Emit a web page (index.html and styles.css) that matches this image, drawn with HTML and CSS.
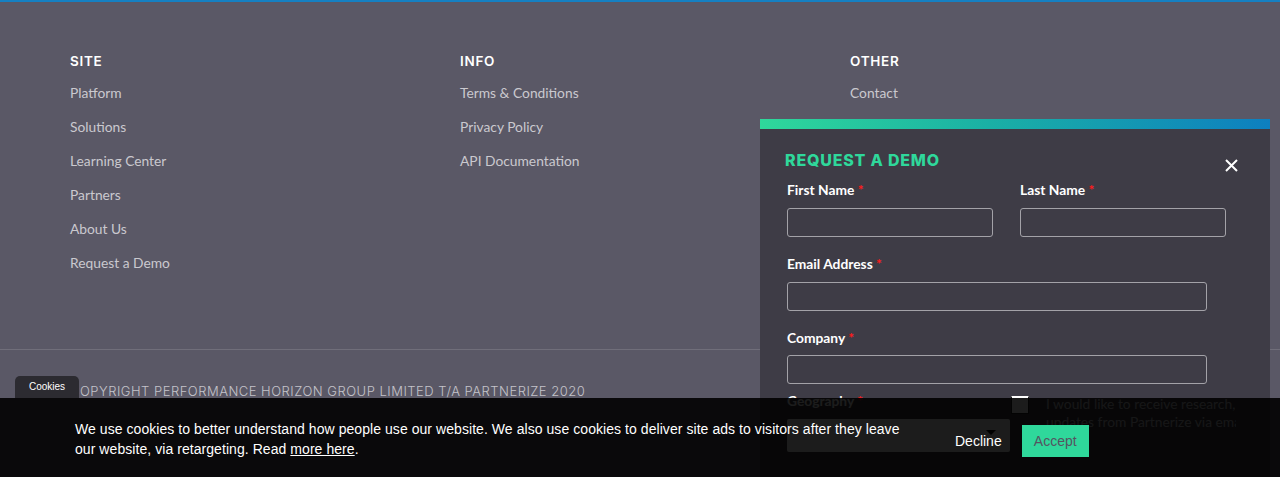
FILE: index.html
```html
<!DOCTYPE html>
<html lang="en">
<head>
<meta charset="utf-8">
<title>Footer</title>
<link rel="stylesheet" href="styles.css">
</head>
<body>
<div class="topline"></div>
<footer class="footer">
  <div class="cols">
    <div class="col">
      <h4 class="col-title">SITE</h4>
      <a class="link" href="#">Platform</a>
      <a class="link" href="#">Solutions</a>
      <a class="link" href="#">Learning Center</a>
      <a class="link" href="#">Partners</a>
      <a class="link" href="#">About Us</a>
      <a class="link" href="#">Request a Demo</a>
    </div>
    <div class="col">
      <h4 class="col-title">INFO</h4>
      <a class="link" href="#">Terms &amp; Conditions</a>
      <a class="link" href="#">Privacy Policy</a>
      <a class="link" href="#">API Documentation</a>
    </div>
    <div class="col">
      <h4 class="col-title">OTHER</h4>
      <a class="link" href="#">Contact</a>
    </div>
  </div>
  <div class="bottom">
    <p class="copyright">COPYRIGHT PERFORMANCE HORIZON GROUP LIMITED T/A PARTNERIZE 2020</p>
  </div>
</footer>

<div class="modal">
  <div class="modal-bar"></div>
  <div class="modal-body">
    <h3 class="modal-title">REQUEST A DEMO</h3>
    <button class="close" aria-label="Close">
      <svg width="13" height="13" viewBox="0 0 13 13"><path d="M1 1 L12 12 M12 1 L1 12" stroke="#fff" stroke-width="2" fill="none"/></svg>
    </button>
    <form class="form">
      <div class="row two">
        <div class="field">
          <label class="label">First Name <span class="req">*</span></label>
          <input class="input" type="text">
        </div>
        <div class="field">
          <label class="label">Last Name <span class="req">*</span></label>
          <input class="input" type="text">
        </div>
      </div>
      <div class="field">
        <label class="label">Email Address <span class="req">*</span></label>
        <input class="input wide" type="text">
      </div>
      <div class="field company">
        <label class="label">Company <span class="req">*</span></label>
        <input class="input wide" type="text">
      </div>
      <div class="row last">
        <div class="field geo">
          <label class="label">Geography <span class="req">*</span></label>
          <div class="select"><span class="arrow"></span></div>
        </div>
        <div class="consent">
          <span class="checkbox"></span>
          <div class="consent-text">
            <span>I would like to receive research, insights and</span>
            <span>updates from Partnerize via email</span>
          </div>
        </div>
      </div>
    </form>
  </div>
</div>

<div class="cookie-tab">Cookies</div>
<div class="cookie-banner">
  <p class="cookie-text">We use cookies to better understand how people use our website. We also use cookies to deliver site ads to visitors after they leave our website, via retargeting. Read <a href="#" class="more">more here</a>.</p>
  <button class="btn decline">Decline</button>
  <button class="btn accept">Accept</button>
</div>
</body>
</html>
```

FILE: styles.css
```css
html, body {
  margin: 0;
  padding: 0;
}
body {
  width: 1280px;
  height: 477px;
  overflow: hidden;
  background: #5a5866;
  position: relative;
  font-family: "Lato", "Liberation Sans", sans-serif;
}
.topline {
  height: 2px;
  background: #1580c2;
}
.footer {
  background: #5a5866;
}
.cols {
  display: grid;
  grid-template-columns: 390px 390px 390px;
  padding: 49px 0 76px 70px;
  border-bottom: 1px solid #706e7a;
}
.col {
  display: flex;
  flex-direction: column;
  align-items: flex-start;
}
.col-title {
  margin: 0 0 12px;
  font-family: "Inter", "Open Sans", sans-serif;
  font-weight: 600;
  font-size: 13.5px;
  line-height: 20px;
  color: #ffffff;
  letter-spacing: 0.7px;
}
.link {
  font-family: "Lato", sans-serif;
  font-size: 13.8px;
  line-height: 20px;
  color: #cac9cf;
  text-decoration: none;
  margin-bottom: 14px;
}
.link:last-child {
  margin-bottom: 0;
}
.bottom {
  padding: 31px 0 0 70px;
}
.copyright {
  margin: 0;
  font-family: "Inter", "Open Sans", sans-serif;
  font-weight: 300;
  font-size: 13px;
  line-height: 20px;
  color: #c4c3ca;
  letter-spacing: 0.5px;
}

/* modal */
.modal {
  position: absolute;
  left: 760px;
  top: 119px;
  width: 510px;
  height: 400px;
  background: #3e3c46;
}
.modal-bar {
  height: 10px;
  background: linear-gradient(90deg, #2fd89b 0%, #1ab0a5 45%, #0d7fc0 100%);
}
.modal-body {
  position: relative;
  padding: 21px 0 0 25px;
}
.modal-title {
  margin: 0 0 11px;
  font-family: "Inter", "Open Sans", sans-serif;
  font-weight: 800;
  font-size: 16px;
  line-height: 20px;
  color: #2fd89b;
  letter-spacing: 0.8px;
}
.close {
  position: absolute;
  right: 32px;
  top: 30px;
  width: 13px;
  height: 13px;
  padding: 0;
  border: 0;
  background: transparent;
  display: block;
}
.close svg { display: block; }
.form {
  padding-left: 2px;
  display: flex;
  flex-direction: column;
}
.row {
  display: flex;
}
.row.two {
  gap: 27px;
}
.field {
  display: flex;
  flex-direction: column;
  margin-bottom: 18px;
}
.label {
  font-family: "Lato", sans-serif;
  font-weight: 700;
  font-size: 13.8px;
  line-height: 18px;
  color: #ffffff;
  margin-bottom: 9px;
}
.req {
  color: #ff1a1a;
}
.input {
  box-sizing: border-box;
  width: 206px;
  height: 29px;
  border: 1px solid #a3a2a8;
  border-radius: 3px;
  background: transparent;
  margin: 0;
}
.input.wide {
  width: 420px;
}
.company {
  margin-bottom: 8px;
}
.company .label {
  margin-bottom: 8px;
}
.geo {
  width: 223px;
  margin-bottom: 0;
}
.select {
  position: relative;
  height: 33px;
  background: #ffffff;
  border-radius: 2px;
}
.arrow {
  position: absolute;
  right: 14px;
  top: 11px;
  width: 0;
  height: 0;
  border-left: 5px solid transparent;
  border-right: 5px solid transparent;
  border-top: 5px solid #000;
}
.consent {
  display: flex;
  align-items: flex-start;
  padding-top: 4px;
}
.checkbox {
  box-sizing: border-box;
  width: 18px;
  height: 18px;
  margin-left: 1px;
  background: #ffffff;
  border: 1px solid #222;
  border-top: 1px solid #ffffff;
}
.consent-text {
  margin-left: 17px;
  margin-top: -1px;
  width: 190px;
  overflow: hidden;
  display: flex;
  flex-direction: column;
  font-family: "Lato", sans-serif;
  font-size: 13.8px;
  line-height: 18px;
  color: #c8c7cc;
  white-space: nowrap;
}

/* cookies */
.cookie-tab {
  position: absolute;
  left: 15px;
  top: 376px;
  width: 64px;
  height: 22px;
  box-sizing: border-box;
  border-radius: 5px 5px 0 0;
  background: #2c2b31;
  color: #ffffff;
  font-family: "Liberation Sans", Arial, sans-serif;
  font-size: 10px;
  line-height: 22px;
  text-align: center;
  z-index: 5;
}
.cookie-banner {
  position: absolute;
  left: 0;
  top: 398px;
  width: 1280px;
  height: 79px;
  box-sizing: border-box;
  background: rgba(0, 0, 0, 0.89);
  display: flex;
  align-items: flex-start;
  padding: 21px 0 0 75px;
  z-index: 6;
}
.cookie-text {
  margin: 0 30px 0 0;
  width: 840px;
  font-family: "Liberation Sans", Arial, sans-serif;
  font-size: 14px;
  line-height: 20px;
  letter-spacing: 0.06px;
  color: #ffffff;
}
.more {
  color: #ffffff;
  text-decoration: underline;
}
.btn {
  font-family: "Liberation Sans", Arial, sans-serif;
  font-size: 14px;
  height: 32px;
  margin-top: 6px;
  border: 0;
  padding: 0 10px;
  cursor: pointer;
}
.decline {
  background: transparent;
  color: #ffffff;
  margin-right: 10px;
}
.accept {
  background: #2fd89b;
  color: #555461;
  width: 67px;
  padding: 0;
}
```
